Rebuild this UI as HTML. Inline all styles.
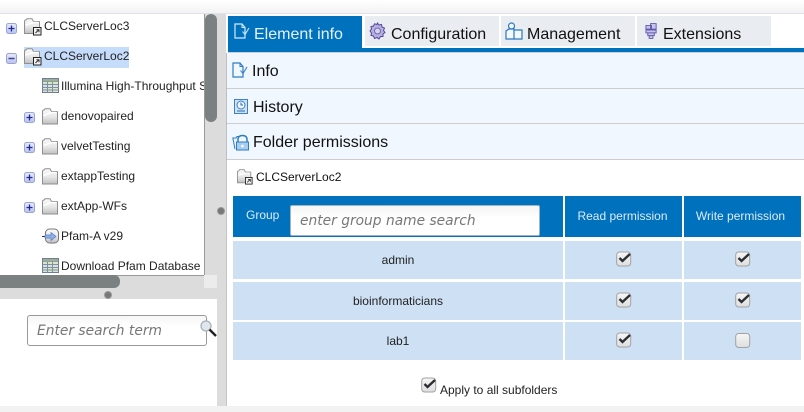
<!DOCTYPE html>
<html><head><meta charset="utf-8">
<style>
html,body{margin:0;padding:0;width:804px;height:412px;overflow:hidden;background:#fff;font-family:"Liberation Sans",sans-serif;color:#111}
.a{position:absolute}
.t{position:absolute;white-space:nowrap;font-size:12px;line-height:14px;color:#222}
.tab{position:absolute;top:16px;height:30px;width:134px;background:#e9edf1}
.tl{position:absolute;white-space:nowrap;font-size:16px;line-height:18px;color:#111}
.acc{position:absolute;left:227px;width:577px;background:#f0f7fe}
.sep{position:absolute;left:227px;width:577px;height:1px;background:#cfcccc}
.th{position:absolute;top:196px;height:41px;background:#0071bc;color:#dcecf8;font-size:12px;text-align:center;line-height:40px}
.td{position:absolute;height:38px;background:#cde0f4;font-size:12px;text-align:center;line-height:37px;color:#222}
.lbl{position:absolute;left:0;right:0;top:1px;line-height:37px}
.ph{position:absolute;white-space:nowrap;font-family:"DejaVu Sans",sans-serif;font-style:italic;font-size:13.8px;line-height:18px;color:#777}
svg{position:absolute;overflow:visible}
</style></head>
<body>
<svg width="0" height="0" style="position:absolute">
<defs>
<linearGradient id="fg" x1="0" y1="0" x2="0" y2="1"><stop offset="0" stop-color="#fafafa"/><stop offset=".55" stop-color="#e6e6e6"/><stop offset="1" stop-color="#bfbfbf"/></linearGradient>
<linearGradient id="cb" x1="0" y1="0" x2="0" y2="1"><stop offset="0" stop-color="#f6f6f6"/><stop offset="1" stop-color="#dedede"/></linearGradient>
<linearGradient id="plus" x1="0" y1="0" x2="0" y2="1"><stop offset="0" stop-color="#e8ebf8"/><stop offset="1" stop-color="#b9c2ea"/></linearGradient>
<symbol id="folder" viewBox="0 0 16 17" overflow="visible">
<path d="M.5 16V3.500Q.5 2 2 2L3 .8H8L9.500 3.500H15Q15.500 3.500 15.500 4V16Z" fill="url(#fg)" stroke="#8f8f8f"/>
<path d="M1.500 7.500L9.500 4.500H14.500" fill="none" stroke="#fff" stroke-width="1.500"/>
</symbol>
<symbol id="server" viewBox="0 0 18 18" overflow="visible">
<path d="M.5 15.500V3.500Q.5 2 2 2L3 .8H8L9.500 3.500H15Q15.500 3.500 15.500 4V15.500Z" fill="url(#fg)" stroke="#8f8f8f"/>
<path d="M1.500 7L9.500 4.500H14.500" fill="none" stroke="#fff" stroke-width="1.500"/>
<rect x="9.500" y="9.500" width="7.500" height="7.500" fill="#f2f2f2" stroke="#222"/>
<path d="M11.500 15L14.500 12M12.500 11.800H15V14.300" fill="none" stroke="#333"/>
</symbol>
<symbol id="plusb" viewBox="0 0 11 11" overflow="visible">
<rect x=".5" y=".5" width="10" height="10" rx="2" fill="url(#plus)" stroke="#9aa4d8"/>
<path d="M2.500 5.500H8.500M5.500 2.500V8.500" stroke="#1e2a9a" stroke-width="1.300"/>
</symbol>
<symbol id="minusb" viewBox="0 0 11 11" overflow="visible">
<rect x=".5" y=".5" width="10" height="10" rx="2" fill="url(#plus)" stroke="#9aa4d8"/>
<path d="M2.500 5.500H8.500" stroke="#3a449e" stroke-width="1.500"/>
</symbol>
<symbol id="grid" viewBox="0 0 17 15" overflow="visible">
<rect x=".5" y=".5" width="16" height="14" fill="#d9e6c8" stroke="#6f7b9e"/>
<path d="M.5 3.500H16.500M.5 6.500H16.500M.5 9.500H16.500M.5 12H16.500M5.500 .5V14.500M10.500 .5V14.500" stroke="#7f8eb0" fill="none"/>
<rect x="1" y="1" width="15" height="2.500" fill="#9fae8c"/>
</symbol>
<symbol id="doc" viewBox="0 0 16 16" overflow="visible">
<path d="M1 1H8L11 4.500V15H1Z" fill="none" stroke="currentColor" stroke-width="1.200"/>
<path d="M8 1V4.500H11" fill="none" stroke="currentColor"/>
<path d="M8.500 8.500L11 11.500L15 5" fill="none" stroke="currentColor" stroke-width="1.300" opacity=".8"/>
</symbol>
<symbol id="check" viewBox="0 0 16 15" overflow="visible">
<rect x=".7" y="1" width="14" height="14" rx="3" fill="url(#cb)" stroke="#a2a2a2"/>
<path d="M3.500 7L6.500 10L14 3" fill="none" stroke="#2b2f33" stroke-width="2.400"/>
</symbol>
</defs>
</svg>

<!-- top strip -->
<div class="a" style="left:0;top:0;width:804px;height:13px;background:linear-gradient(#fff,#f3f3f3)"></div>
<div class="a" style="left:0;top:13px;width:804px;height:1px;background:#dde3ea"></div>

<!-- left side -->
<div class="a" style="left:204px;top:14px;width:1px;height:262px;background:#999"></div>
<div class="a" style="left:205px;top:14px;width:12px;height:261px;background:#dcdcdc"></div>
<div class="a" style="left:205px;top:14px;width:12px;height:108px;background:#7b8080;border-radius:6px"></div>
<div class="a" style="left:0;top:275px;width:204px;height:1px;background:#999"></div>
<div class="a" style="left:0;top:276px;width:204px;height:12px;background:#dcdcdc"></div>
<div class="a" style="left:0;top:275px;width:120px;height:13px;background:#7b8080;border-radius:0 6px 6px 0"></div>
<div class="a" style="left:204px;top:275px;width:13px;height:13px;background:#ececec"></div>
<div class="a" style="left:0;top:288px;width:217px;height:11px;background:#dcdcdc"></div>
<div class="a" style="left:104px;top:291px;width:6px;height:6px;border-radius:50%;background:#777;border:1px solid #999"></div>
<div class="a" style="left:217px;top:14px;width:9px;height:392px;background:#dcdcdc"></div>
<div class="a" style="left:217px;top:207px;width:6px;height:6px;border-radius:50%;background:#777;border:1px solid #999"></div>
<div class="a" style="left:0;top:406px;width:804px;height:6px;background:#f2f2f2"></div>

<!-- tree -->
<div class="a" style="left:24px;top:47px;width:105px;height:21px;background:#c6dcfb"></div>
<svg style="left:6px;top:23px" width="11" height="11"><use href="#plusb" width="11" height="11"/></svg>
<svg style="left:6px;top:53px" width="11" height="11"><use href="#minusb" width="11" height="11"/></svg>
<svg style="left:24px;top:18px" width="18" height="18"><use href="#server" width="18" height="18"/></svg>
<svg style="left:24px;top:48px" width="18" height="18"><use href="#server" width="18" height="18"/></svg>
<div class="t" style="left:44px;top:19px">CLCServerLoc3</div>
<div class="t" style="left:44px;top:49px">CLCServerLoc2</div>
<svg style="left:42px;top:78px" width="17" height="15"><use href="#grid" width="17" height="15"/></svg>
<div class="t" style="left:61px;top:79px;width:143px;overflow:hidden">Illumina High-Throughput Sequencing</div>
<svg style="left:24px;top:112px" width="11" height="11"><use href="#plusb" width="11" height="11"/></svg>
<svg style="left:42px;top:108px" width="16" height="17"><use href="#folder" width="16" height="17"/></svg>
<div class="t" style="left:61px;top:109px">denovopaired</div>
<svg style="left:24px;top:142px" width="11" height="11"><use href="#plusb" width="11" height="11"/></svg>
<svg style="left:42px;top:138px" width="16" height="17"><use href="#folder" width="16" height="17"/></svg>
<div class="t" style="left:61px;top:139px">velvetTesting</div>
<svg style="left:24px;top:172px" width="11" height="11"><use href="#plusb" width="11" height="11"/></svg>
<svg style="left:42px;top:168px" width="16" height="17"><use href="#folder" width="16" height="17"/></svg>
<div class="t" style="left:61px;top:169px">extappTesting</div>
<svg style="left:24px;top:202px" width="11" height="11"><use href="#plusb" width="11" height="11"/></svg>
<svg style="left:42px;top:198px" width="16" height="17"><use href="#folder" width="16" height="17"/></svg>
<div class="t" style="left:61px;top:199px">extApp-WFs</div>
<svg style="left:42px;top:228px" width="17" height="16">
<path d="M0 8.500H3" stroke="#333"/>
<rect x="3.500" y="1" width="13" height="14" rx="4" fill="url(#fg)" stroke="#777"/>
<path d="M3 7H9V4.500L14 8.500L9 12.500V10H3Z" fill="#8fb0e8" stroke="#5a7cc0" stroke-width=".7"/>
</svg>
<div class="t" style="left:61px;top:229px">Pfam-A v29</div>
<svg style="left:42px;top:258px" width="17" height="15"><use href="#grid" width="17" height="15"/></svg>
<div class="t" style="left:61px;top:259px">Download Pfam Database</div>

<!-- search -->
<div class="a" style="left:27px;top:315px;width:180px;height:31px;box-sizing:border-box;border:1px solid #999;border-radius:3px;background:linear-gradient(#f6f6f6,#fff 40%)"></div>
<div class="ph" style="left:37px;top:322px">Enter search term</div>
<svg style="left:200px;top:320px" width="17" height="17">
<circle cx="6" cy="6" r="5" fill="#dfe6ee" stroke="#aab2b8" stroke-width="1.300"/>
<path d="M9.500 9.500L16 16" stroke="#222" stroke-width="2.400"/>
</svg>

<!-- tabs -->
<div class="a" style="left:228px;top:16px;width:134px;height:32px;background:#0071bc"></div>
<div class="tab" style="left:365px"></div>
<div class="tab" style="left:501px"></div>
<div class="tab" style="left:637px"></div>
<div class="a" style="left:228px;top:48px;width:576px;height:4px;background:#0071bc"></div>
<div class="a" style="left:228px;top:52px;width:576px;height:1px;background:#c9cfd4"></div>

<svg style="left:234px;top:23px;color:#d5e9f7" width="16" height="16"><use href="#doc" width="16" height="16"/></svg>
<div class="tl" style="left:254px;top:26px;color:#e6f2fb">Element info</div>

<svg style="left:369px;top:22px" width="17" height="18" viewBox="0 0 17 18">
<path d="M8.500 1L10 3L12.500 2.500L13 5L15.500 6L14.500 8.500L16 10.500L14 12L14 14.500L11.500 14.500L10 17L8 15.500L5.500 16.500L4.500 14L2 13.500L2.500 11L1 9L2.500 7L2 4.500L4.500 4L5.500 1.800L8 2.500Z" fill="#b6b0de" stroke="#4f4a9e"/>
<circle cx="8.500" cy="9" r="3" fill="#d6d3ee" stroke="#6f6ab0"/>
</svg>
<div class="tl" style="left:391px;top:26px">Configuration</div>

<svg style="left:505px;top:22px" width="18" height="18" viewBox="0 0 18 18">
<circle cx="6.500" cy="4" r="3" fill="#f3f8fc" stroke="#2a78c0" stroke-width="1.200"/>
<path d="M1 17V9L4 7H9V17ZM9 8H17V17H9" fill="#f3f8fc" stroke="#2a78c0" stroke-width="1.200"/>
</svg>
<div class="tl" style="left:527px;top:26px">Management</div>

<svg style="left:645px;top:22px" width="13" height="18" viewBox="0 0 14 18">
<path d="M1 3H7V7H1ZM6 1H12V7H6ZM1 8H12V11H1ZM3 11H10V14H3ZM4.500 14H8.500V17H4.500Z" fill="#c6c4ea" stroke="#5f5aae"/>
</svg>
<div class="tl" style="left:663px;top:26px">Extensions</div>

<!-- accordion -->
<div class="a" style="left:226px;top:53px;width:1px;height:107px;background:#bfbfbf"></div>
<div class="a" style="left:226px;top:160px;width:1px;height:246px;background:#c4c4c4"></div>
<div class="acc" style="top:53px;height:35px"></div>
<div class="sep" style="top:88px"></div>
<div class="acc" style="top:89px;height:34px"></div>
<div class="sep" style="top:123px"></div>
<div class="acc" style="top:124px;height:35px"></div>
<div class="sep" style="top:159px"></div>

<svg style="left:232px;top:62px;color:#2f7cc4" width="16" height="16"><use href="#doc" width="16" height="16"/></svg>
<div class="tl" style="left:252px;top:63px">Info</div>
<svg style="left:234px;top:99px" width="14" height="15" viewBox="0 0 14 15">
<rect x=".5" y=".5" width="13" height="14" fill="#cfe2f6" stroke="#3d82c8"/>
<circle cx="7" cy="6" r="4" fill="#eef5fb" stroke="#3d82c8"/>
<path d="M7 3.500V6H9M3 12H11" stroke="#2a6cb0" fill="none"/>
</svg>
<div class="tl" style="left:253px;top:99px">History</div>
<svg style="left:232px;top:134px" width="18" height="17" viewBox="0 0 18 17">
<path d="M3 15L.8 4H4L5 2.500H8" fill="#eaf3fb" stroke="#2f7cc4"/>
<path d="M6 8V5.500Q6 1.500 10.500 1.500T15 5.500V8" fill="none" stroke="#2f7cc4" stroke-width="1.500"/>
<rect x="4.500" y="8" width="12" height="8" fill="#a9cdee" stroke="#2f7cc4"/>
<circle cx="10.500" cy="12" r="1.300" fill="#fff"/>
</svg>
<div class="tl" style="left:253px;top:134px">Folder permissions</div>

<!-- content -->
<svg style="left:237px;top:169px" width="16" height="16"><use href="#server" width="16" height="16"/></svg>
<div class="t" style="left:256px;top:170px;color:#111">CLCServerLoc2</div>

<div class="th" style="left:233px;width:330px"></div>
<div class="t" style="left:246px;top:208px;color:#dcecf8">Group</div>
<div class="a" style="left:290px;top:205px;width:250px;height:31px;box-sizing:border-box;border:1px solid #9fb4c4;border-radius:2px;background:linear-gradient(#f4f4f4,#fff 40%)"></div>
<div class="ph" style="left:300px;top:212px">enter group name search</div>
<div class="th" style="left:565px;width:117px"><span style="position:relative;left:-1px">Read permission</span></div>
<div class="th" style="left:684px;width:117px"><span style="position:relative;left:-2px">Write permission</span></div>

<div class="td" style="left:233px;top:241px;width:330px"><span class="lbl">admin</span></div>
<div class="td" style="left:565px;top:241px;width:117px"></div>
<div class="td" style="left:684px;top:241px;width:117px"></div>
<div class="td" style="left:233px;top:282px;width:330px"><span class="lbl">bioinformaticians</span></div>
<div class="td" style="left:565px;top:282px;width:117px"></div>
<div class="td" style="left:684px;top:282px;width:117px"></div>
<div class="td" style="left:233px;top:322px;width:330px"><span class="lbl">lab1</span></div>
<div class="td" style="left:565px;top:322px;width:117px"></div>
<div class="td" style="left:684px;top:322px;width:117px"></div>

<svg style="left:616px;top:251px" width="16" height="16"><use href="#check" width="16" height="15"/></svg>
<svg style="left:735px;top:251px" width="16" height="16"><use href="#check" width="16" height="15"/></svg>
<svg style="left:616px;top:292px" width="16" height="16"><use href="#check" width="16" height="15"/></svg>
<svg style="left:735px;top:292px" width="16" height="16"><use href="#check" width="16" height="15"/></svg>
<svg style="left:616px;top:332px" width="16" height="16"><use href="#check" width="16" height="15"/></svg>
<svg style="left:735px;top:333px" width="16" height="16" viewBox="0 0 16 16"><rect x=".7" y=".5" width="14" height="14" rx="3" fill="url(#cb)" stroke="#a2a2a2"/></svg>
<svg style="left:421px;top:377px" width="16" height="16"><use href="#check" width="16" height="15"/></svg>
<div class="t" style="left:440px;top:383px">Apply to all subfolders</div>
</body></html>
